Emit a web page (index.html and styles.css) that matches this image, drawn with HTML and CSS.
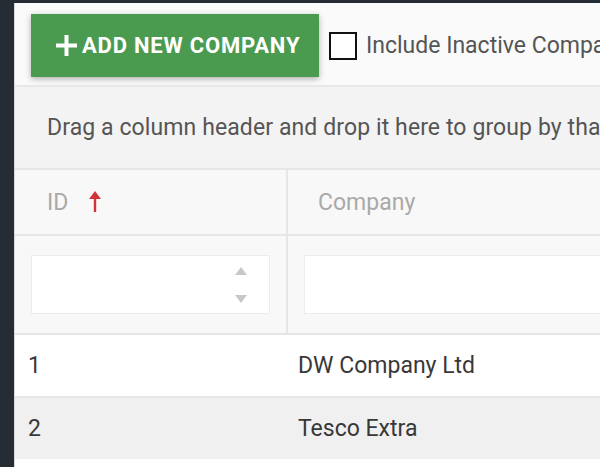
FILE: index.html
```html
<!DOCTYPE html>
<html lang="en">
<head>
    <meta charset="UTF-8">
    <title>Companies</title>
    <link rel="stylesheet" href="styles.css">
</head>
<body>
    <div class="layout">
        <aside class="sidebar"></aside>
        <main class="content">
            <div class="toolbar">
                <button class="btn-add">
                    <svg class="plus" width="21" height="21" viewBox="0 0 21 21"><path d="M8.5 0h4v8.5h8.5v4h-8.5v8.5h-4v-8.5H0v-4h8.5z" fill="#fff"/></svg>
                    ADD NEW COMPANY
                </button>
                <label class="check">
                    <span class="box"></span>
                    Include Inactive Companies
                </label>
            </div>

            <div class="group-panel">Drag a column header and drop it here to group by that column</div>

            <div class="grid">
                <div class="row head">
                    <div class="cell col-id">ID
                        <svg class="sort" width="12" height="21" viewBox="0 0 12 21"><path d="M6 0L12 8H7.2V21H4.8V8H0z" fill="#d2323a"/></svg>
                    </div>
                    <div class="cell col-name">Company</div>
                </div>
                <div class="row filter">
                    <div class="cell col-id">
                        <div class="num-input">
                            <span class="spin">
                                <svg width="14" height="40" viewBox="0 0 14 40"><path d="M1 10L7 2 13 10z M1 30L7 38 13 30z" fill="#c8c8c8"/></svg>
                            </span>
                        </div>
                    </div>
                    <div class="cell col-name">
                        <div class="text-input"></div>
                    </div>
                </div>
                <div class="row data">
                    <div class="cell col-id">1</div>
                    <div class="cell col-name">DW Company Ltd</div>
                </div>
                <div class="row data alt">
                    <div class="cell col-id">2</div>
                    <div class="cell col-name">Tesco Extra</div>
                </div>
            </div>
        </main>
    </div>
</body>
</html>
```

FILE: styles.css
```css
body {
    margin: 0;
    font-family: Roboto, "Liberation Sans", sans-serif;
    background: #262c34;
    overflow: hidden;
}
.layout {
    display: flex;
    padding-top: 3px;
    height: 464px;
}
.sidebar {
    width: 14px;
    flex: none;
}
.content {
    flex: 1;
    min-width: 0;
    background: #fff;
    border-left: 1px solid #d9d9d9;
    overflow: hidden;
}
.toolbar {
    display: flex;
    align-items: center;
    background: #fafafa;
    padding: 11px 16px 8px;
    border-bottom: 2px solid #e8e8e8;
    white-space: nowrap;
}
.btn-add {
    flex: none;
    display: flex;
    align-items: center;
    gap: 5px;
    width: 288px;
    height: 63px;
    padding: 0 0 0 25px;
    border: none;
    background: #4a9a4f;
    color: #fff;
    font-family: Roboto, "Liberation Sans", sans-serif;
    font-weight: bold;
    font-size: 22px;
    letter-spacing: 0.8px;
    box-shadow: 0 2px 6px rgba(0, 0, 0, 0.3);
}
.check {
    display: flex;
    align-items: center;
    margin-left: 10px;
    font-size: 23px;
    color: #555;
}
.box {
    flex: none;
    width: 24px;
    height: 24px;
    border: 2px solid #111;
    background: #fff;
    margin-right: 9px;
}
.group-panel {
    height: 81px;
    line-height: 81px;
    background: #f3f3f3;
    padding-left: 32px;
    font-size: 23px;
    letter-spacing: 0.1px;
    color: #555;
    white-space: nowrap;
}
.grid {
    width: 700px;
}
.row {
    display: flex;
    border-top: 2px solid #e6e6e6;
}
.cell {
    box-sizing: border-box;
    white-space: nowrap;
}
.col-id {
    width: 271px;
    flex: none;
}
.col-name {
    flex: 1;
    border-left: 2px solid #e6e6e6;
}
.head {
    height: 64px;
    background: #f8f8f8;
    color: #a9a9a9;
    font-size: 23px;
}
.head .cell {
    display: flex;
    align-items: center;
}
.head .col-id {
    padding-left: 32px;
}
.head .col-name {
    padding-left: 30px;
}
.sort {
    margin-left: 21px;
    margin-top: -2px;
}
.filter {
    height: 97px;
    background: #f8f8f8;
}
.filter .cell {
    padding: 19px 16px 0 16px;
}
.num-input,
.text-input {
    height: 57px;
    background: #fff;
    border: 1px solid #ececec;
    display: flex;
    justify-content: flex-end;
    align-items: center;
}
.spin {
    margin-right: 21px;
    display: flex;
}
.data {
    height: 61px;
    align-items: center;
    font-size: 23px;
    color: #383838;
}
.data .col-id {
    padding-left: 13px;
}
.data .col-name {
    border-left: none;
    padding-left: 12px;
}
.alt {
    background: #f0f0f0;
}
```
